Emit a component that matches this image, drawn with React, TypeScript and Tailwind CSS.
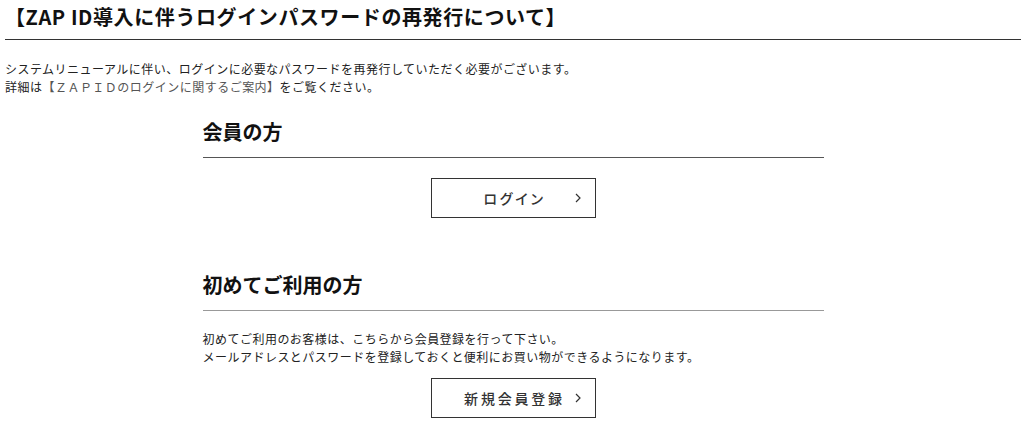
const JP = "font-['Noto_Sans_CJK_JP','Noto_Sans',sans-serif]";

function Chevron() {
  return (
    <svg width="6" height="10" viewBox="0 0 6 10" className="absolute right-[14px] top-1/2 -translate-y-1/2">
      <polyline points="1,1 5,5 1,9" fill="none" stroke="#333" strokeWidth="1.2" />
    </svg>
  );
}

function LinkButton({ label }: { label: string }) {
  return (
    <a
      href="#"
      className="relative mx-auto flex h-[40px] w-[165px] items-center justify-center border border-[#333] bg-white text-[14px] font-medium tracking-[0.2em] text-[#333] [font-feature-settings:'palt']"
    >
      <span className="pl-[3px]">{label}</span>
      <Chevron />
    </a>
  );
}

export default function App() {
  return (
    <div className={"min-h-[433px] bg-white pl-[5px] pr-[3px] text-[#222] " + JP}>
      <h1 className="border-b border-[#333] pt-[3px] pb-[8px] text-[20px] font-bold leading-[28px] tracking-[0.03em] text-[#111]">
        【ZAP ID導入に伴うログインパスワードの再発行について】
      </h1>

      <p className="mt-[20px] text-[12px] leading-[18px] tracking-[0.04em]">
        システムリニューアルに伴い、ログインに必要なパスワードを再発行していただく必要がございます。
        <br />
        詳細は
        <a href="#" className="text-[#555]">
          【ＺＡＰＩＤのログインに関するご案内】
        </a>
        をご覧ください。
      </p>

      <section className="mx-auto mt-[22px] w-[621px]">
        <h2 className="border-b border-[#555] pb-[11px] text-[20px] font-bold leading-[28px] text-[#111]">
          会員の方
        </h2>
        <div className="mt-[20px]">
          <LinkButton label="ログイン" />
        </div>
      </section>

      <section className="mx-auto mt-[53px] w-[621px]">
        <h2 className="border-b border-[#999] pb-[11px] text-[20px] font-bold leading-[28px] text-[#111]">
          初めてご利用の方
        </h2>
        <p className="mt-[19px] text-[12px] leading-[18px] tracking-[0.04em]">
          初めてご利用のお客様は、こちらから会員登録を行って下さい。
          <br />
          メールアドレスとパスワードを登録しておくと便利にお買い物ができるようになります。
        </p>
        <div className="mt-[12px]">
          <LinkButton label="新規会員登録" />
        </div>
      </section>
    </div>
  );
}
